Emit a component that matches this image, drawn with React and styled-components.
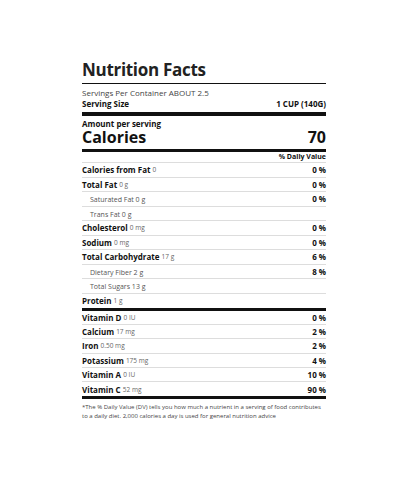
import React from 'react'
import styled, { createGlobalStyle } from 'styled-components'

const GlobalStyle = createGlobalStyle`
  body {
    margin: 0;
    background: #fff;
    font-family: 'Open Sans', 'Liberation Sans', sans-serif;
    color: #111;
  }
`

const nutrients = [
  { name: 'Calories from Fat', amount: '0', dv: '0 %' },
  { name: 'Total Fat', amount: '0 g', dv: '0 %' },
  { name: 'Saturated Fat 0 g', sub: true, dv: '0 %' },
  { name: 'Trans Fat 0 g', sub: true },
  { name: 'Cholesterol', amount: '0 mg', dv: '0 %' },
  { name: 'Sodium', amount: '0 mg', dv: '0 %' },
  { name: 'Total Carbohydrate', amount: '17 g', dv: '6 %' },
  { name: 'Dietary Fiber 2 g', sub: true, dv: '8 %' },
  { name: 'Total Sugars 13 g', sub: true },
  { name: 'Protein', amount: '1 g', last: true }
]

const vitamins = [
  { name: 'Vitamin D', amount: '0 IU', dv: '0 %' },
  { name: 'Calcium', amount: '17 mg', dv: '2 %' },
  { name: 'Iron', amount: '0.50 mg', dv: '2 %' },
  { name: 'Potassium', amount: '175 mg', dv: '4 %' },
  { name: 'Vitamin A', amount: '0 IU', dv: '10 %' },
  { name: 'Vitamin C', amount: '52 mg', dv: '90 %', last: true }
]

export default function App() {
  return (
    <>
      <GlobalStyle />
      <Label>
        <Title>Nutrition Facts</Title>
        <Servings>Servings Per Container ABOUT 2.5</Servings>
        <SizeRow>
          <span>Serving Size</span>
          <span>1 CUP (140G)</span>
        </SizeRow>
        <Bar $h={4} />
        <Amount>Amount per serving</Amount>
        <CaloriesRow>
          <span>Calories</span>
          <span>70</span>
        </CaloriesRow>
        <Bar $h={3} />
        <DailyHead>% Daily Value</DailyHead>
        {nutrients.map((n) => (
          <Row key={n.name} $sub={n.sub} $last={n.last} $h={14.5}>
            <span>
              {n.sub ? (
                <SubName>{n.name}</SubName>
              ) : (
                <>
                  <Name>{n.name}</Name> <Qty>{n.amount}</Qty>
                </>
              )}
            </span>
            <Pct>{n.dv}</Pct>
          </Row>
        ))}
        <Bar $h={3} />
        {vitamins.map((n) => (
          <Row key={n.name} $last={n.last} $h={14.2}>
            <span>
              <Name>{n.name}</Name> <Qty>{n.amount}</Qty>
            </span>
            <Pct>{n.dv}</Pct>
          </Row>
        ))}
        <Bar $h={3} />
        <Footnote>
          *The % Daily Value (DV) tells you how much a nutrient in a serving of food contributes
          to a daily diet. 2,000 calories a day is used for general nutrition advice
        </Footnote>
      </Label>
    </>
  )
}

const Label = styled.div`
  width: 244px;
  margin: 0 0 0 82px;
  padding-top: 57px;
`

const Title = styled.h1`
  margin: 0;
  font-size: 17px;
  font-weight: 700;
  line-height: 26px;
  letter-spacing: -0.3px;
  border-bottom: 1px solid #111;
  color: #222;
`

const Servings = styled.div`
  font-size: 8px;
  line-height: 11px;
  margin-top: 3px;
  color: #444;
`

const SizeRow = styled.div`
  display: flex;
  justify-content: space-between;
  font-size: 8px;
  font-weight: 700;
  line-height: 11px;
  margin-bottom: 3px;
`

const Bar = styled.div`
  height: ${(p) => p.$h}px;
  background: #111;
`

const Amount = styled.div`
  font-size: 8px;
  font-weight: 700;
  line-height: 9px;
  margin-top: 3px;
`

const CaloriesRow = styled.div`
  display: flex;
  justify-content: space-between;
  align-items: baseline;
  font-size: 16px;
  font-weight: 700;
  line-height: 18px;
  margin-bottom: 3px;
`

const DailyHead = styled.div`
  text-align: right;
  font-size: 7px;
  font-weight: 700;
  line-height: 10px;
  border-bottom: 1px solid #ddd;
`

const Row = styled.div`
  display: flex;
  justify-content: space-between;
  align-items: center;
  height: ${(p) => p.$h}px;
  box-sizing: border-box;
  padding-left: ${(p) => (p.$sub ? '8px' : '0')};
  border-bottom: ${(p) => (p.$last ? 'none' : '1px solid #ddd')};
  font-size: 8px;
`

const Name = styled.b`
  font-weight: 700;
`

const Qty = styled.span`
  font-size: 6.5px;
  color: #666;
  vertical-align: 1px;
`

const SubName = styled.span`
  font-size: 7px;
  color: #555;
`

const Pct = styled.span`
  font-weight: 700;
`

const Footnote = styled.p`
  margin: 4px 0 0;
  font-size: 6px;
  line-height: 9px;
  color: #444;
`
